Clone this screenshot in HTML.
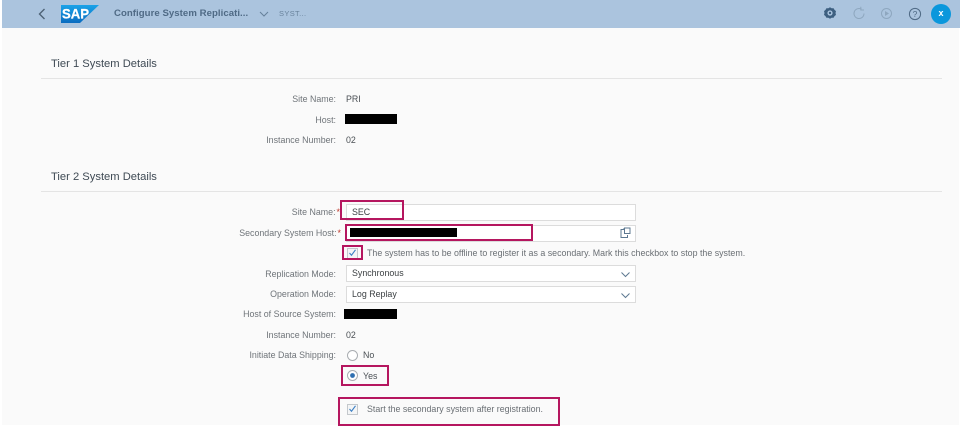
<!DOCTYPE html>
<html><head><meta charset="utf-8">
<style>
html,body{margin:0;padding:0;background:#fff}
#p{position:relative;width:960px;height:435px;overflow:hidden;background:#fff;font-family:"Liberation Sans",sans-serif;color:#4a4f54;filter:blur(.35px)}
.a{position:absolute}
.t{position:absolute;font-size:8.85px;line-height:12px;white-space:nowrap}
.l{position:absolute;font-size:8.85px;line-height:12px;white-space:nowrap;color:#6f7479;text-align:right;right:624px}
.h{position:absolute;left:51px;font-size:11.2px;line-height:14px;color:#3f4a54;white-space:nowrap}
.in{position:absolute;left:346px;width:288px;height:15px;background:#fff;border:1px solid #dcdcdc}
.m{position:absolute;border:2px solid #b5165f;box-sizing:border-box}
.k{position:absolute;background:#000}
.cb{position:absolute;width:9px;height:9px;border:1px solid #c4c8cc;background:#f4f5f6}
</style></head><body><div id="p">
<div class="a" style="left:2px;top:0;width:957px;height:425px;background:#fafafa"></div>
<div class="a" style="left:2px;top:0;width:958px;height:27.5px;background:#abc4de"></div>

<svg class="a" style="left:36px;top:7px" width="12" height="14" viewBox="0 0 12 14"><path d="M8.5 2L3.5 7l5 5" fill="none" stroke="#4d6275" stroke-width="1.4"/></svg>
<svg class="a" style="left:60px;top:4px" width="40" height="20" viewBox="0 0 40 20"><defs><linearGradient id="g" x1="0" y1="0" x2="0" y2="1"><stop offset="0" stop-color="#1aa3e8"/><stop offset="1" stop-color="#0a6cc0"/></linearGradient></defs><path d="M1 1H39L20 19H1Z" fill="url(#g)"/><text x="2" y="14.5" font-family="Liberation Sans" font-weight="700" font-size="14" fill="#fff" stroke="#fff" stroke-width=".3" textLength="27" lengthAdjust="spacingAndGlyphs">SAP</text></svg>
<div class="t" style="left:114px;top:7px;font-size:9.6px;line-height:14px;font-weight:700;color:#4f6a85;letter-spacing:.05px">Configure System Replicati...</div>
<svg class="a" style="left:259px;top:10px" width="10" height="8" viewBox="0 0 10 8"><path d="M1 2l4 4 4-4" fill="none" stroke="#66809a" stroke-width="1"/></svg>
<div class="t" style="left:279px;top:8px;font-size:7.5px;color:#69839c;letter-spacing:.35px">SYST...</div>

<svg class="a" style="left:823px;top:6px" width="14" height="14" viewBox="0 0 14 14"><path d="M7 1.3l1.6 1 2-.1.9 1.7 1.5 1.2-.5 1.9.5 1.9-1.5 1.2-.9 1.7-2-.1-1.6 1-1.6-1-2 .1-.9-1.7-1.5-1.2.5-1.9-.5-1.9 1.5-1.2.9-1.7 2 .1z" fill="#3d5f80"/><circle cx="7" cy="7" r="2.6" fill="#abc4de"/><circle cx="7" cy="7" r="1.2" fill="#3d5f80"/></svg>
<svg class="a" style="left:852px;top:6px" width="14" height="15" viewBox="0 0 14 15"><path d="M9.5 3.2A5 5 0 1 0 12 7.5" fill="none" stroke="#8ea7bf" stroke-width="1"/><path d="M8.8 0.8v3.2h3.2" fill="none" stroke="#8ea7bf" stroke-width="1"/></svg>
<svg class="a" style="left:880px;top:7px" width="13" height="13" viewBox="0 0 13 13"><circle cx="6.5" cy="6.5" r="5" fill="none" stroke="#8ea7bf" stroke-width="1"/><path d="M5 4l4 2.5L5 9z" fill="#8ea7bf"/></svg>
<svg class="a" style="left:908px;top:7px" width="14" height="14" viewBox="0 0 14 14"><circle cx="7" cy="7" r="5.6" fill="none" stroke="#4f6a85" stroke-width="1"/><text x="7" y="10" text-anchor="middle" font-family="Liberation Sans" font-size="8.5" fill="#4f6a85">?</text></svg>
<div class="a" style="left:931px;top:4px;width:20px;height:20px;border-radius:50%;background:#0a97dc;color:#fff;font-size:9px;font-weight:700;line-height:19px;text-align:center">x</div>

<div class="h" style="top:57px">Tier 1 System Details</div>
<div class="a" style="left:41px;top:78px;width:901px;height:1px;background:#e4e4e4"></div>
<div class="l" style="top:93px">Site Name:</div>
<div class="t" style="left:346px;top:93px">PRI</div>
<div class="l" style="top:114px">Host:</div>
<div class="k" style="left:345px;top:114px;width:52px;height:10px"></div>
<div class="l" style="top:134px">Instance Number:</div>
<div class="t" style="left:346px;top:134px">02</div>

<div class="h" style="top:170px">Tier 2 System Details</div>
<div class="a" style="left:41px;top:191px;width:901px;height:1px;background:#e4e4e4"></div>

<div class="l" style="top:206px;right:620px">Site Name:<span style="color:#c0392b;margin-left:1px">*</span></div>
<div class="in" style="top:204px"></div>
<div class="t" style="left:352px;top:206px;color:#3c4043">SEC</div>

<div class="l" style="top:227px;right:619px">Secondary System Host:<span style="color:#c0392b;margin-left:1px">*</span></div>
<div class="in" style="top:225px"></div>
<div class="k" style="left:350px;top:228px;width:107px;height:9px"></div>
<svg class="a" style="left:620px;top:227px" width="11" height="11" viewBox="0 0 11 11"><path d="M3.5 1.5v1H1v8h6.5V8" fill="none" stroke="#5d7891" stroke-width="1"/><rect x="4.5" y="1" width="5.5" height="5.5" fill="none" stroke="#5d7891" stroke-width="1"/></svg>

<div class="cb" style="left:347px;top:248px"></div>
<svg class="a" style="left:347px;top:247px" width="11" height="11" viewBox="0 0 11 11"><path d="M2.5 6l2 2.2L8.5 2.8" fill="none" stroke="#3b7fc4" stroke-width="1.1"/></svg>
<div class="t" style="left:367px;top:247px;color:#6a6f74">The system has to be offline to register it as a secondary. Mark this checkbox to stop the system.</div>

<div class="l" style="top:268px">Replication Mode:</div>
<div class="in" style="top:265px"></div>
<div class="t" style="left:352px;top:267px;color:#3c4043">Synchronous</div>
<svg class="a" style="left:620px;top:271px" width="11" height="7" viewBox="0 0 11 7"><path d="M1.5 1.5l4 4 4-4" fill="none" stroke="#5d7891" stroke-width="1"/></svg>

<div class="l" style="top:288px">Operation Mode:</div>
<div class="in" style="top:286px"></div>
<div class="t" style="left:352px;top:288px;color:#3c4043">Log Replay</div>
<svg class="a" style="left:620px;top:292px" width="11" height="7" viewBox="0 0 11 7"><path d="M1.5 1.5l4 4 4-4" fill="none" stroke="#5d7891" stroke-width="1"/></svg>

<div class="l" style="top:308px">Host of Source System:</div>
<div class="k" style="left:344px;top:309px;width:53px;height:10px"></div>
<div class="l" style="top:329px">Instance Number:</div>
<div class="t" style="left:346px;top:329px">02</div>
<div class="l" style="top:349px">Initiate Data Shipping:</div>
<svg class="a" style="left:346px;top:349px" width="13" height="13" viewBox="0 0 13 13"><circle cx="6.5" cy="6.5" r="5" fill="#fff" stroke="#a9adb1" stroke-width="1"/></svg>
<div class="t" style="left:363px;top:349px">No</div>
<svg class="a" style="left:346px;top:369px" width="13" height="13" viewBox="0 0 13 13"><circle cx="6.5" cy="6.5" r="5" fill="#fff" stroke="#a9adb1" stroke-width="1"/><circle cx="6.5" cy="6.5" r="2.4" fill="#2f6fb0"/></svg>
<div class="t" style="left:363px;top:370px">Yes</div>

<div class="cb" style="left:347px;top:404px"></div>
<svg class="a" style="left:347px;top:403px" width="11" height="11" viewBox="0 0 11 11"><path d="M2.5 6l2 2.2L8.5 2.8" fill="none" stroke="#3b7fc4" stroke-width="1.1"/></svg>
<div class="t" style="left:367px;top:403px;color:#6a6f74">Start the secondary system after registration.</div>

<div class="m" style="left:340px;top:200px;width:64px;height:20px"></div>
<div class="m" style="left:345px;top:224px;width:188px;height:17px"></div>
<div class="m" style="left:342px;top:245px;width:21px;height:15px"></div>
<div class="m" style="left:341px;top:365px;width:48px;height:21px"></div>
<div class="m" style="left:338px;top:397px;width:222px;height:29px"></div>
</div></body></html>
